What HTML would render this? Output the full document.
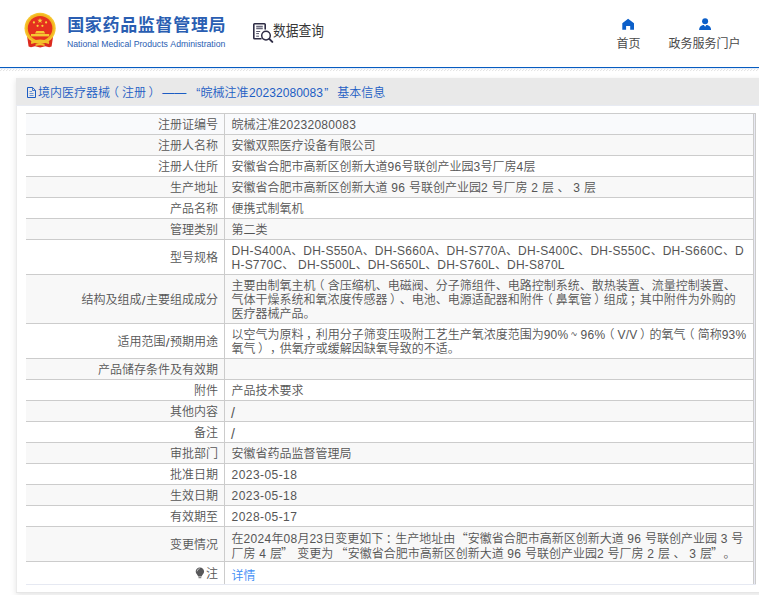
<!DOCTYPE html>
<html lang="zh-CN">
<head>
<meta charset="utf-8">
<title>境内医疗器械（注册）基本信息</title>
<style>
*{box-sizing:border-box;margin:0;padding:0}
html,body{width:759px;height:595px;overflow:hidden;background:#fff}
body{position:relative;font-family:"Liberation Sans","Noto Sans CJK SC",sans-serif;font-size:12px;color:#555;line-height:14px;text-spacing-trim:space-all;font-kerning:none}
.abs{position:absolute}
/* header */
#logo-title{left:67.2px;top:13.4px;height:26px;line-height:26px;font-size:17px;letter-spacing:.67px;font-weight:bold;color:#2a5eb2;white-space:nowrap}
#logo-sub{left:67px;top:37.6px;height:12px;line-height:12px;font-size:8.7px;color:#2a5eb2;white-space:nowrap}
#dq{left:273px;top:18.9px;height:24px;line-height:24px;font-size:14.6px;color:#383838;white-space:nowrap;transform-origin:0 50%;transform:scaleX(.875)}
.nav{top:36px;height:16px;line-height:16px;font-size:12px;color:#4a4a4a;white-space:nowrap}
#blue{left:0;top:67px;width:759px;height:1px;background:#075cc0}
#blue2{left:0;top:68px;width:759px;height:1px;background:#0d5dc3;opacity:.12}
#hatch{left:0;top:68.6px}
/* panel */
#panel{font-weight:350;left:16px;top:78px;width:780px;height:515px;background:#fff;box-shadow:0 1.5px 6px rgba(0,0,0,.115)}
#pl{left:0;top:28px;width:1px;height:487px;background:#ebebeb}
#pb{left:0;top:514px;width:780px;height:1px;background:#e6e6e6}
#phead{left:0;top:0;width:780px;height:28px;background:#e9e9e9;border-bottom:1px solid #e8ebf3}
#ptitle{left:22px;top:8px;height:14px;line-height:14px;color:#1c5dc4;white-space:nowrap}
#ptitle span{position:absolute;top:0;white-space:nowrap}
#ptitle b{font-weight:normal;letter-spacing:.06px;margin-left:.6px}
/* table */
#tbl{left:10px;top:35px;width:730px;height:472px}
.r{position:absolute;left:0;width:727px;border-top:1px solid #ccc;background:#fff}
.r.g{background:#f8f8f8}
.r.h{background:#f9fafc}
.k{position:absolute;left:0;top:0;bottom:0;width:199px;border-right:1px solid #ccc;text-align:right;padding-right:6px;white-space:nowrap;display:flex;align-items:center;justify-content:flex-end;padding-top:2px}
.v{position:absolute;left:205.6px;top:4px;white-space:nowrap;word-spacing:.35px}
.k span{display:block}
#rb1{left:727px;top:0;width:1px;height:471px;background:#ccc}
#rb2{left:728px;top:0;width:1px;height:472px;background:#e8e9f3}
#rb3{left:729px;top:0;width:1px;height:472px;background:#ccc}
#rbt{left:727px;top:0;width:3px;height:1px;background:#ccc}
#bb{left:0;top:471px;width:730px;height:1px;background:#e6e9f2}
a{color:#3c8cf5;text-decoration:none}
u{text-decoration:none;position:relative}
.pl{left:-3px}
.q{font-family:"Noto Sans CJK SC",sans-serif}
.ql{margin-left:-3.4px}
.ql2{margin-left:-1.3px;margin-right:.1px}
.qr{margin-left:-1px;margin-right:.5px}
.pr{left:2.5px}
.pc{left:2.4px}
.v i{font-style:normal;letter-spacing:.28px}
.v .l2 i{letter-spacing:.2px}
.v i.dt{letter-spacing:.43px}
.ks{font-style:normal;font-size:13.6px;margin:0 .4px;position:relative;top:.5px}
.v i.sl{font-size:14px;position:relative;top:1px;left:-.5px}
.tl{display:inline-block;transform:scaleX(.5);left:-.6px}
</style>
</head>
<body>
<!-- emblem -->
<svg class="abs" style="left:22px;top:11px" width="38" height="38" viewBox="0 0 38 38">
  <path d="M5.2 26 L6.6 35.6 L9 36.2 L13 35.3 L18.1 36.5 L23.2 35.3 L27.2 36.2 L29.6 35.6 L31 26 Z" fill="#dc2a1e"/>
  <circle cx="18.1" cy="17.3" r="15.6" fill="#f6c62f"/>
  <circle cx="18.1" cy="17.3" r="14.2" fill="#f3b51f"/>
  <circle cx="18.1" cy="17.2" r="12.3" fill="#e5301f"/>
  <path d="M9 30.6 Q18.1 26.4 27.2 30.6 L27 33 Q18.1 29.6 9.2 33 Z" fill="#f2c02a"/>
  <path d="M13.4 33.4 Q18.1 31.4 22.8 33.4 L22.6 35 Q18.1 33.6 13.6 35 Z" fill="#f2c02a"/>
  <polygon points="18,6.9 18.7,8.8 20.7,8.8 19.1,10 19.7,11.9 18,10.8 16.3,11.9 16.9,10 15.3,8.8 17.3,8.8" fill="#f7d23a"/>
  <circle cx="11.9" cy="11.4" r="1.1" fill="#f7d23a"/>
  <circle cx="15.6" cy="14.8" r="1.1" fill="#f7d23a"/>
  <circle cx="20.4" cy="14.8" r="1.1" fill="#f7d23a"/>
  <circle cx="24.1" cy="11.4" r="1.1" fill="#f7d23a"/>
  <path d="M13 22.4 L14.4 20 L21.8 20 L23.2 22.4 Z" fill="#f5c832"/>
  <rect x="9" y="23" width="18.2" height="2.4" fill="#f5c832"/>
</svg>
<div id="logo-title" class="abs">国家药品监督管理局</div>
<div id="logo-sub" class="abs">National Medical Products Administration</div>

<!-- data query -->
<svg class="abs" style="left:252px;top:22px" width="22" height="22" viewBox="0 0 22 22">
  <path d="M9 16.7H2.6Q1.8 16.7 1.8 15.9V2.6Q1.8 1.8 2.6 1.8H12.4Q13.2 1.8 13.2 2.6V7" fill="none" stroke="#2f2d45" stroke-width="1.6" stroke-linecap="round"/>
  <path d="M4.2 4.6H10.8M4.2 6.4H10.8" stroke="#6a697c" stroke-width="1.5"/>
  <path d="M4.2 9.5H8.2M4.2 11.6H7M4.2 14.2H7" stroke="#55546a" stroke-width="1"/>
  <circle cx="14" cy="13.6" r="4.3" fill="#fff" stroke="#2f2d45" stroke-width="1.5"/>
  <path d="M17.3 16.9L20.3 19.9" stroke="#2f2d45" stroke-width="2" stroke-linecap="round"/>
</svg>
<div id="dq" class="abs">数据查询</div>

<!-- nav -->
<svg class="abs" style="left:620px;top:16px" width="16" height="16" viewBox="0 0 16 16">
  <polygon points="8.1,2.8 14,7.2 14,13.8 10.2,13.8 10.2,10 6.1,10 6.1,13.8 2.3,13.8 2.3,7.2" fill="#0b5fc9"/>
</svg>
<div class="abs nav" style="left:616.5px">首页</div>
<svg class="abs" style="left:697px;top:16px" width="16" height="16" viewBox="0 0 16 16">
  <circle cx="8.1" cy="5.2" r="3" fill="#0b5fc9"/>
  <path d="M2.1 13.9 Q2.1 10 6 8.9 L6.9 8.9 L8.1 10.8 L9.3 8.9 L10.2 8.9 Q14.1 10 14.1 13.9 Z" fill="#0b5fc9"/>
</svg>
<div class="abs nav" style="left:668.5px">政务服务门户</div>

<div id="blue" class="abs"></div>
<div id="blue2" class="abs"></div>
<svg id="hatch" class="abs" width="759" height="3" viewBox="0 0 759 3"><defs><pattern id="hp" width="3" height="3" patternUnits="userSpaceOnUse"><path d="M.3 1.9L1.8 .4" stroke="#d6d6d6" stroke-width=".8" stroke-linecap="round"/></pattern></defs><rect width="759" height="3" fill="url(#hp)"/></svg>

<div id="panel" class="abs">
  <div id="phead" class="abs"></div><div id="pl" class="abs"></div><div id="pb" class="abs"></div>
  <svg class="abs" style="left:11px;top:9px" width="10" height="12" viewBox="0 0 10 12">
    <path d="M.5 .5H5.6L8.5 3.4V10.5H.5Z" fill="none" stroke="#1c5dc4" stroke-width="1"/>
    <path d="M5.5 .5V3.5H8.5" fill="none" stroke="#1c5dc4" stroke-width="1" opacity=".8"/>
    <path d="M2.5 4.5H5M2.5 6.5H6.5M2.5 8.5H6.5" stroke="#1c5dc4" stroke-width="1" opacity=".6"/>
  </svg>
  <div id="ptitle" class="abs"><span style="left:0">境内医疗器械<u class="pl">（</u>注册<u class="pr">）</u></span><span style="left:124.3px">——</span><span style="left:158.2px">“</span><span style="left:162.4px">皖械注准<b>20232080083</b></span><span style="left:286.3px">”</span><span style="left:299.2px">基本信息</span></div>

  <div id="tbl" class="abs">
    <div class="r h" style="top:0;height:21px"><div class="k">注册证编号</div><div class="v">皖械注准<i>20232080083</i></div></div>
    <div class="r g" style="top:21px;height:21px"><div class="k">注册人名称</div><div class="v">安徽双熙医疗设备有限公司</div></div>
    <div class="r" style="top:42px;height:21px"><div class="k">注册人住所</div><div class="v">安徽省合肥市高新区创新大道<i>96</i>号联创产业园<i>3</i>号厂房<i>4</i>层</div></div>
    <div class="r g" style="top:63px;height:21px"><div class="k">生产地址</div><div class="v">安徽省合肥市高新区创新大道 <i>96</i> 号联创产业园<i>2</i> 号厂房 <i>2</i> 层 、 <i>3</i> 层</div></div>
    <div class="r" style="top:84px;height:21px"><div class="k">产品名称</div><div class="v">便携式制氧机</div></div>
    <div class="r g" style="top:105px;height:21px"><div class="k">管理类别</div><div class="v">第二类</div></div>
    <div class="r" style="top:126px;height:35px"><div class="k">型号规格</div><div class="v"><i>DH-S400A</i>、<i>DH-S550A</i>、<i>DH-S660A</i>、<i>DH-S770A</i>、<i>DH-S400C</i>、<i>DH-S550C</i>、<i>DH-S660C</i>、<i>D</i><br><span class="l2"><i>H-S770C</i>、 <i>DH-S500L</i>、<i>DH-S650L</i>、<i>DH-S760L</i>、<i>DH-S870L</i></span></div></div>
    <div class="r g" style="top:161px;height:49px"><div class="k">结构及组成<i class="ks">/</i>主要组成成分</div><div class="v">主要由制氧主机<u class="pl">（</u>含压缩机、电磁阀、分子筛组件、电路控制系统、散热装置、流量控制装置、<br>气体干燥系统和氧浓度传感器<u class="pr">）</u>、电池、电源适配器和附件<u class="pl">（</u>鼻氧管<u class="pr">）</u>组成<u class="pc">；</u>其中附件为外购的<br>医疗器械产品。</div></div>
    <div class="r" style="top:210px;height:35px"><div class="k">适用范围<i class="ks">/</i>预期用途</div><div class="v">以空气为原料<u class="pc">，</u>利用分子筛变压吸附工艺生产氧浓度范围为<i>90%</i><u class="tl">～</u><i>96%</i><u class="pl">（</u><i>V/V</i><u class="pr">）</u>的氧气<u class="pl">（</u>简称<i>93%</i><br>氧气<u class="pr">）</u><u class="pc">，</u>供氧疗或缓解因缺氧导致的不适。</div></div>
    <div class="r g" style="top:245px;height:21px"><div class="k">产品储存条件及有效期</div><div class="v"></div></div>
    <div class="r" style="top:266px;height:21px"><div class="k">附件</div><div class="v">产品技术要求</div></div>
    <div class="r g" style="top:287px;height:21px"><div class="k">其他内容</div><div class="v"><i class="sl">/</i></div></div>
    <div class="r" style="top:308px;height:21px"><div class="k">备注</div><div class="v"><i class="sl">/</i></div></div>
    <div class="r g" style="top:329px;height:21px"><div class="k">审批部门</div><div class="v">安徽省药品监督管理局</div></div>
    <div class="r" style="top:350px;height:21px"><div class="k">批准日期</div><div class="v"><i class="dt">2023-05-18</i></div></div>
    <div class="r g" style="top:371px;height:21px"><div class="k">生效日期</div><div class="v"><i class="dt">2023-05-18</i></div></div>
    <div class="r" style="top:392px;height:21px"><div class="k">有效期至</div><div class="v"><i class="dt">2028-05-17</i></div></div>
    <div class="r g" style="top:413px;height:35px"><div class="k">变更情况</div><div class="v">在<i>2024</i>年<i>08</i>月<i>23</i>日变更如下<u class="pc">：</u>生产地址由 <u class="q ql">“</u>安徽省合肥市高新区创新大道 <i>96</i> 号联创产业园 <i>3</i> 号<br>厂房 <i>4</i> 层<u class="q qr">”</u> 变更为 <u class="q ql2">“</u>安徽省合肥市高新区创新大道 <i>96</i> 号联创产业园<i>2</i> 号厂房 <i>2</i> 层 、 <i>3</i> 层<u class="q qr">”</u>。</div></div>
    <div class="r" style="top:448px;height:23px"><div class="k"><svg width="10" height="12" viewBox="0 0 10 12" style="margin-right:1.1px;margin-top:-1.8px"><path d="M4.9 .4C7.3 .4 9.1 2.2 9.1 4.5C9.1 6.6 7.2 7.6 6.6 9.5L3.2 9.5C2.6 7.6 .7 6.6 .7 4.5C.7 2.2 2.5 .4 4.9 .4Z" fill="#58585a"/><path d="M2.1 4.3A3 3 0 0 1 4.7 1.6" fill="none" stroke="#e8e8e8" stroke-width=".7"/><rect x="3.5" y="10.2" width="2.8" height="1" fill="#666"/></svg>注</div><div class="v" style="top:6.5px"><a>详情</a></div></div>
    <div id="rb1" class="abs"></div><div id="rb2" class="abs"></div><div id="rb3" class="abs"></div><div id="rbt" class="abs"></div>
    <div id="bb" class="abs"></div>
  </div>
</div>
</body>
</html>
